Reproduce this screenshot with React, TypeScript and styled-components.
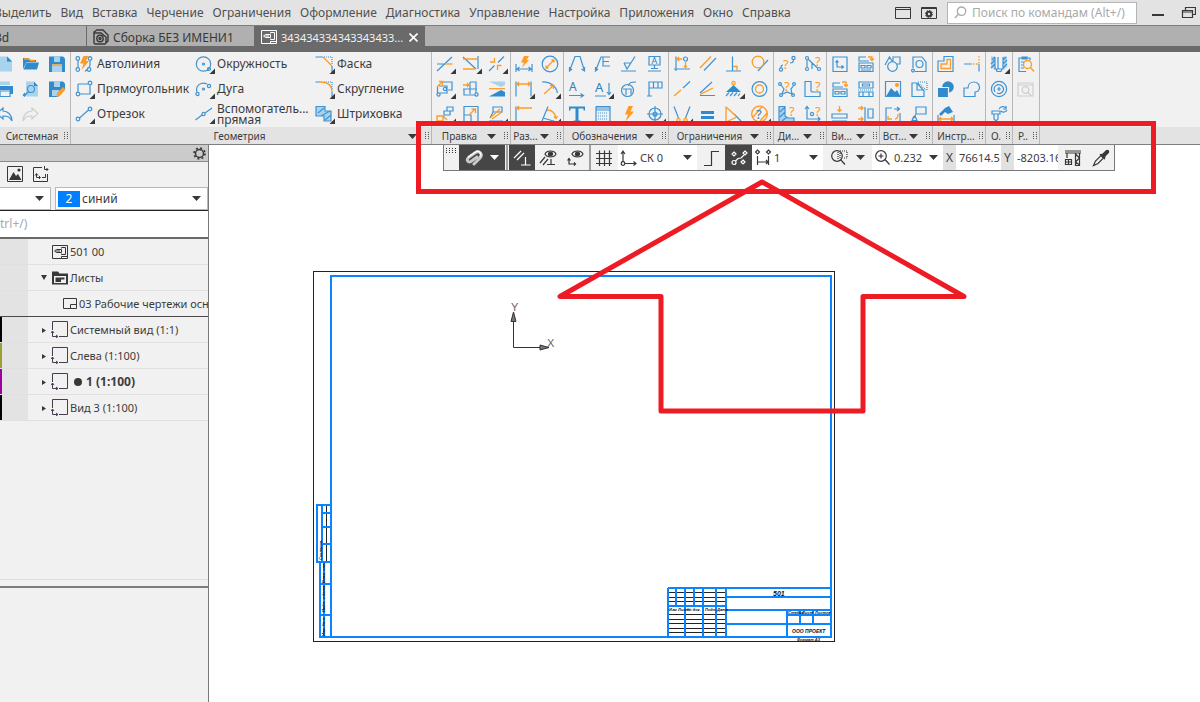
import React from "react";
import styled, { createGlobalStyle } from "styled-components";

const Global = createGlobalStyle`
  * { box-sizing: border-box; }
  body { margin: 0; background: #fff; overflow: hidden; }
  body, button, input, select { font-family: "Noto Sans", "Open Sans", sans-serif; font-size: 12px; color: #3c3c3c; }
  button { background: none; border: 0; padding: 0; margin: 0; text-align: left; white-space: nowrap; }
  svg { display: block; flex: none; }
`;

const BLUE = "#3f93d2";
const ORANGE = "#ff9a24";
const INK = "#383838";
const FRAME = "#0a84ff";

/* ---------- icons ---------- */

type Glyph = {
  b?: string; // blue strokes
  o?: string; // orange strokes
  fb?: string; // blue fills
  fl?: string; // light blue fills
  fo?: string; // orange fills
  w?: string; // separating strokes in the ribbon colour
  dash?: string; // dotted strokes
  q?: [number, number, string?]; // question mark: x, baseline, colour
  t?: [string, number, number, number]; // letter, x, y, size
  more?: boolean; // corner mark of a drop-down tool
  off?: boolean; // disabled
};

const c = (x: number, y: number, r: number) =>
  `M${x - r} ${y}a${r} ${r} 0 1 0 ${r * 2} 0a${r} ${r} 0 1 0 ${-r * 2} 0`;

const glyphs: Record<string, Glyph> = {
  newDoc: { fl: "M3 1.5H12V6.5H17V16.5H3Z", fb: "M12 1.5L17 6.5H12Z" },
  open: { fb: "M2 14V3H7L9 5H15V7H5.5Z M5.5 7.5H18L16 14.5H2.5Z", o: "M3 4H8L9.500 5.500H14" },
  save: { fb: "M2 1.5H16L18 3.5V17H2Z", fl: "M7 1.5H13V7H7Z M5 9H15V17H5Z", o: "M5 10H15" },
  print: { fb: "M2 6H18V14H15V10H5V14H2Z", fl: "M5 1.5H15V5H5Z", b: "M5 11H15V16.5H5Z" },
  preview: { fl: "M5 1.5H13V6H17V16.5H5Z", fb: "M13 1.5V6H17Z M1.500 15L4 12.500L5 15L3.500 17Z", b: c(10, 9, 3.5) + "M7.500 11.500L3 16" },
  saveAs: { fb: "M2 1.5H16L18 3.5V9L11 17H2Z", fl: "M7 1.5H13V7H7Z M5 10H12V16H5Z", fo: "M10 13L16 7L18.500 9.500L12.500 16L9.500 17Z" },
  undo: { b: "M8 3L2 8.500L8 14V11C13 11 15 12 17 16C17 10 13 6 8 6Z" },
  redo: { b: "M11 3L17 8.500L11 14V11C6 11 4 12 2 16C2 10 6 6 11 6Z", off: true },

  autoline: { b: c(3.8, 14.5, 1.8) + c(15, 14.5, 1.8) + c(3.8, 3.5, 1.8) + c(16, 3.5, 1.8) + "M4 5.500V12.500M16 5.500V10C16 13 13 14 11 16.500", fo: "M9.500 1H14.500L12 6H15L7.500 15L9.500 8.500H6Z" },
  rect: { b: "M4 4H14M16 5V14H6M4 4V12" + c(16, 3, 1.8) + c(4, 14, 1.8), more: true },
  segment: { b: "M5.500 13L14.500 5" + c(16, 4, 1.8) + c(4, 14, 1.8), more: true },
  circle: { b: c(9.5, 9, 7.2) + c(9.5, 9, 1) + c(15, 14, 1.5), more: true },
  arc: { b: "M3 12C1 6 7 1 13 4" + c(3.5, 14, 1.6) + c(15, 6, 1.6) + c(9.5, 9, 1), more: true },
  helper: { b: "M1.500 15L8 10M11 8L18 3" + c(9.5, 9, 1.6), more: true },
  chamfer: { b: "M1.500 2H9M18 11V17", o: "M9 2L18 11", dash: "M10 2H18V10", more: true },
  fillet: { b: "M1.500 2H6M18 12V17", o: "M6 2C14 2 18 5 18 12", dash: "M10 2H18V9", more: true },
  hatch: { fl: "M2 1.500H11V6H17V16H10V11H2Z", b: "M2 1.500H11V6H17V16H10V11H2ZM4 8L10 3M7 11L16 6M11 15L17 10", more: true },

  trim: { b: "M2 9H10M2 16L17 2", o: "M10 9H17.500", more: true },
  extend: { b: "M2 2L15 14M17 1V14", o: "M2 4H16M2 14H14", more: true },
  split: { b: "M2 16L7.500 10.500M11 7.500L17 1.500", o: "M3 7H7.500V3M10.500 15V10.500H14.500", more: true },
  move: { b: "M8 2H17V10H13M4 6H12V13H5M2.500 7V13" + c(3.5, 14.5, 1.6) + c(10, 9, 1.6), o: "M2 7L7 2M4 1.500H7.500V5", more: true },
  stretch: { b: "M9 2H15V13M2 9H16M9 2V14M3 9V15H14" + c(15.5, 14.5, 1.6), o: "M2 5H8M6 3L8 5L6 7" },
  mirror: { fl: "M2 1.500H18V5L14 7Z", fb: "M2 16.500H18V12L14 10Z", o: "M2 8.700H18" },
  array: { b: "M9 6H15V10H9ZM12 2H18V6H12ZM8 12H10", o: "M2 11H8V16H2ZM9 12L12 15", more: true },
  scale: { b: "M3 1.500H17V17H3ZM3 10H10V17", o: "M8 10L14 4M10.500 4H14.500V8" },
  project: { b: "M6 2H15V7H6ZM2 16H16M6 7L3 13", o: "M3 13L13 4M5 14L15 7", more: true },

  autoDim: { b: "M2 9V17M18 9V17M3 14H17M5.500 12L3 14L5.500 16M14.500 12L17 14L14.500 16", fo: "M10 1H15L12.500 5H15L8 12.500L10 7.500H7Z" },
  diameter: { b: c(10, 9, 7.8), o: "M6 13L14 5M6 10.500V13H8.500M11.500 5H14V7.500" },
  linear: { b: "M2 1.500V16.500M17 1.500V16.500", o: "M3 4H16M5 2L3 4L5 6M14 2L16 4L14 6", more: true },
  radial: { b: "M2 2C10 1 16 6 17.500 13", o: "M4 14L13 6M10 5.500H13.500V9", more: true },
  base: { b: "M2 1.500V17", o: "M3 3H18M5 1L3 3L5 5" },
  angular: { b: "M2 16L8 1.500M3 13L17 17", o: "M7 5C12 5 15 8 16 13M14 11.500L16 13.500L17.500 11", more: true },

  leader: { b: "M2.500 16L8 1.500H13L17.500 16M2.500 12V16L5 14M17.500 12V16L14.500 14" },
  leaderE: { b: "M2.500 16L8 2H17M10 2V11H17M10 6.500H16M2.500 12V16L5 14" },
  rough: { b: "M2 16H17M5 8L8 14L16 1.500M5 8H12" },
  datum: { b: "M4 1.500H15V10H4ZM9.500 10V13M3 16H16M6 13.500H13", t: ["A", 6.5, 9, 9] },
  viewA: { b: "M2 15.500H16M13.500 13.500L16.500 15.500L13.500 17.500", t: ["A", 2, 11, 12] },
  cutA: { b: "M2 16H13M16 3V14M14 12L16 14.500L18 12", t: ["A", 2, 12, 13], more: true },
  weld: { b: c(8.5, 10.5, 6) + "M4 9H12V14M7 9V15M9.500 6C10 2 13 2 17 2" },
  flag: { b: "M4 16V2H17V8H4M8.500 2V8M13 2V8M2 16H7" },
  text: { fb: "M2 1.500H18V5.500H16.500V3.500H11.500V15.500H13.500V17H6.500V15.500H8.500V3.500H3.500V5.500H2Z" },
  table: { b: "M3 1.500H17V17M3 1.500V17M3 5H17M3 3H17", dash: "M5 8H15M5 11H15M5 14H15M5 17H15" },
  auto: { fo: "M9.500 1H14L11.500 6.500H15L6.500 16.500L9 9.500H6Z" },
  center: { b: c(10, 9, 6) + "M10 1V17M2 9H18" + c(10, 9, 2), more: true },

  align: { b: "M4 1.500V16M2 14H18" + c(13.5, 4, 2), o: "M5 4H10M7 2L5 4L7 6M13.500 7V12.500M12 11L13.500 12.500L15 11" },
  parallel: { b: "M6 15.500L18 3", o: "M2 13L13 1.500" },
  perp: { b: "M8.500 1.500V15.500M2 16H17", o: "M9 11.500H13V15.500" },
  tangent: { b: "M8 16L18 5", o: c(8, 7, 5.8) },
  collinear: { b: "M11 8L18 1.500", o: "M2 16L9 10" },
  angle: { b: "M2 13L14 2M2 15.500H17", o: "M2 14.500L15 8" },
  fix: { fb: "M9.500 5L17 12H2Z", b: "M2 16L5 12.500M6 16L9 12.500M10 16L13 12.500M14 16L16 13.500", o: c(9.5, 3, 1.6), more: true },
  concentric: { b: c(9.5, 9, 7.4), o: c(9.5, 9, 4) },
  symmetric: { b: "M2 1.500L6.500 13M18 1.500L13.500 13", o: c(6.5, 15, 1.6) + c(13.5, 15, 1.6), more: true },
  equal: { fb: "M3 6H16V9H3ZM3 11H16V14H3Z" },
  bisector: { b: "M10 9L17 16", o: "M2 1.500V17L13 12M2 2L12 11" },
  check: { o: c(9.5, 9, 7.8) + "M3 12L12 2M10 16L17 8", q: [6, 14, "#2f80bb"], more: true },

  measPt: { b: c(4, 14.5, 1.6) + c(16.5, 3, 1.6) + "M4 12.500C4 11 4 10 6 10M16.500 5C16.500 7 16 8 13 8", q: [6, 14] },
  measAng: { b: c(4, 3, 1.5) + c(4, 14, 1.5) + c(16, 14, 1.5) + "M5 4L14.500 13M4 5V12M9 8V14", q: [12, 11] },
  measPoly: { b: "M4 5L7 9L5 14M6 14L10 12L15 14L14 9L17 5" + c(3, 4, 1.4) + c(17, 4, 1.4) + c(4, 15, 1.4) + c(16, 15, 1.4), q: [7, 11] },
  measArea: { b: "M2 1.500H8V11C8 12 9 12 11 12H17V16.500H2Z", q: [12, 11] },
  measMass: { fl: "M2 1.500H8V11L11 13H17V17H2Z", b: "M2 1.500H8V11L11 13H17V17H2ZM3 7L8 2M3 12L8 7M5 16L10 12", q: [12, 11] },
  measXY: { b: "M4 2V14H17M2 4L4 1.500L6 4M15 12L17 14L15 16" + c(9, 9, 1.6), q: [12, 11] },

  viewStd: { b: "M3 2H17V16.500H3ZM7 6V12H13M5.500 7.500L7 5.500L8.500 7.500M11.500 10.500L13.500 12L11.500 13.500" },
  viewAll: { b: "M10 2H3V6H13M3 8H17V16.500H3ZM5 10.500H9V13H5ZM11 10.500H15V13H11ZM5 15H15", o: "M12 2H16V5M14 3.500L16 5.500L18 3.500" },
  viewDet: { b: "M10 3H3V7H13M3 9H17V16.500H3ZM5 11.500H9V14H5ZM11 11.500H15V14H11Z", o: "M12 2H16V6M14 4.500L16 6.500L18 4.500" },
  viewRow: { b: "M3 2H17V8H3ZM6.500 4H13.500V6H6.500ZM3 12H17V16.500H3ZM7 12V16M13 12V16", dash: "M2 10H18" },
  gap: { b: "M2 9H17V13H2ZM2 16H17", o: "M9.500 1V6M7.500 4.500L9.500 6.500L11.500 4.500" },
  gap2: { b: "M12 4H17V13H12ZM9 2V16", o: "M2 3H7M5 1L7 3L5 5M2 14H7M5 12L7 14L5 16" },

  shapes: { b: "M2 10L6.500 2L9 6M10 6V2H17V9H14" + c(9.5, 11.5, 4.8) },
  nut: { b: "M4 13V2H13L17 7V16.500H6" + c(10.5, 9, 3.5) + c(4, 15.5, 1.4) },
  image: { b: "M2.500 1.500H17.500V16.500H2.500Z", fb: "M3 16.500L8 8L12 12L14 10L17.500 16.500Z", fo: c(14, 5, 2) },
  fragment: { b: "M8 3H3V16.500H15V11ZM8 3V10H15", dash: "M9 2H18V10M9 3L17 10" },
  link: { b: "M9 3H3V16.500H6M17 8V16.500H15M11 4H16M14 2L16.500 4L14 6", o: "M5 11V14H9M12 14C14 14 15 12 15 9" },
  callout: { b: "M7 2H17V9H7ZM7 9L3 15.500M5 11L3 15.500H8L6 11" },

  contour: { b: "M2 6H8V1.500H17V16.500H2Z", o: "M5 9H11V4.500H14.500V13.500H5Z" },
  lines: { b: "M2 9H10M17 9V16.500", o: "M11 9H12.500M14 9H15.500M17 1V2.500M17 4V5.500M17 7V8.500" },
  union: { fb: c(12, 7, 5.8) + "M2 8V17H12V8Z", w: "M1.500 7.500H12.500V17" },
  outline: { b: "M2 8H6C6 0 18 0 17.500 8C17 11 15 12 13 12V16.500H2Z" },
  ruler: { fb: "M9 3L13 1L17 7L12 9L9 7L5 11L3 9Z", o: "M3 14H17M5 12L3 14L5 16M15 12L17 14L15 16", b: "M2 10V17M18 10V17" },

  hole: { b: "M6 2V14H14V2M7 14L8 16.500H12L13 14M9 2V14M3 5L6 2M2 9L6 5M2 13L6 9M14 5L17 2M14 9L18 5M14 13L18 9", fl: "M2 1.500H5.500V15L2 12ZM14.500 1.500H18V12L14.500 15Z", more: true },
  spiral: { b: c(10, 9, 7.6) + "M6 12C3 6 9 3 13 6C17 10 12 15 8 13M8 9H12M10 7V11" },
  bolt: { b: "M3 6H11V9H3ZM5 9V14L7 16L9 14V9M10 4C12 1 15 1 17 3M17 1V4H14M12 6C14 8 17 7 18 5" },
  docs: { b: "M10 16.500H3V3H14V5M6 2H11V4H6ZM5 7H8M5 10H7M5 13H8", o: c(11.5, 9.5, 4) + "M14.500 12.500L18 16.500" },
  docsOff: { b: "M2 3H17V16H2ZM2 5H17" + c(9.5, 10, 3.4) + "M12 12.500L15 15.500", off: true },
};

const ToolSvg = ({ name }: { name: string }) => {
  const g = glyphs[name];
  const line = g.off ? "#cfcfcf" : BLUE;
  return (
    <svg width="22" height="20" viewBox="0 0 22 20" fill="none" strokeWidth="1.2" aria-hidden="true">
      {g.fb && <path d={g.fb} fill="#2f8bcb" />}
      {g.fl && <path d={g.fl} fill="#a9d3ec" />}
      {name === "newDoc" && <path d="M12 1.500L17 6.500H12Z" fill="#2f8bcb" />}
      {g.w && <path d={g.w} stroke="#f1f1f1" />}
      {g.b && <path d={g.b} stroke={line} />}
      {g.dash && <path d={g.dash} stroke={BLUE} strokeDasharray="1 1" />}
      {g.o && <path d={g.o} stroke={ORANGE} strokeWidth="1.3" />}
      {g.fo && <path d={g.fo} fill={ORANGE} />}
      {g.q && (
        <text x={g.q[0]} y={g.q[1]} fontSize="13" fill={g.q[2] || ORANGE}>
          ?
        </text>
      )}
      {g.t && (
        <text x={g.t[1]} y={g.t[2]} fontSize={g.t[3]} fill="#2f80bb">
          {g.t[0]}
        </text>
      )}
      {g.more && <path d="M21 13.500V19H15.500Z" fill={INK} />}
    </svg>
  );
};

const Caret = ({ color = INK }: { color?: string }) => (
  <svg width="9" height="5" viewBox="0 0 9 5" aria-hidden="true">
    <path d="M0 0H9L4.500 5Z" fill={color} />
  </svg>
);

const DrawingIcon = ({ color = INK }: { color?: string }) => (
  <svg width="16" height="16" viewBox="0 0 16 16" fill="none" stroke={color} aria-hidden="true">
    <path d="M0.500 1.500H15.500V14.500H0.500ZM9.500 4.500V3.500H13.500V10.500H9.500V9.500M9.500 5.500H4.500L2.500 7L4.500 8.500H9.500ZM4 7H8M9.500 14V12.500H15" />
  </svg>
);

/* ---------- page frame ---------- */

const Page = styled.div`
  position: relative;
  display: flex;
  flex-direction: column;
  min-height: 100vh;
  overflow: hidden;
`;

const TopBar = styled.header`
  display: flex;
  align-items: center;
  height: 26px;
  background: #e3e3e3;
  border-bottom: 1px solid #7d7d7d;
`;

const Menu = styled.nav`
  display: flex;
  gap: 9px;
  margin-left: -6px;
`;

const MenuButton = styled.button`
  line-height: 24px;
  color: #505050;
`;

const WindowTools = styled.div`
  display: flex;
  align-items: center;
  gap: 10px;
  margin-left: auto;
  padding-right: 4px;
`;

const SearchBox = styled.label`
  display: flex;
  align-items: center;
  gap: 5px;
  width: 190px;
  height: 22px;
  padding-left: 6px;
  background: #fff;
  border: 1px solid #b4b4b4;
`;

const PlainInput = styled.input`
  flex: 1;
  min-width: 0;
  padding: 0;
  border: 0;
  background: transparent;
  outline: 0;
  &::placeholder { color: #a9a9a9; opacity: 1; }
`;

const TabStrip = styled.div`
  display: flex;
  height: 26px;
  background: #b0b0b0;
  border-bottom: 6px solid #6a6a6a;
`;

const Tab = styled.button<{ $width: number; $active?: boolean }>`
  display: flex;
  align-items: center;
  gap: 4px;
  width: ${(p) => p.$width}px;
  height: ${(p) => (p.$active ? 26 : 20)}px;
  padding: 2px 6px ${(p) => (p.$active ? 6 : 0)}px;
  overflow: hidden;
  font-size: ${(p) => (p.$active ? 11 : 12)}px;
  color: ${(p) => (p.$active ? "#f2f2f2" : INK)};
  background: ${(p) => (p.$active ? "#6a6a6a" : "#b0b0b0")};
  border-right: 1px solid #6a6a6a;
`;

const ClippedTab = styled(Tab)`
  padding-left: 0;
  text-indent: -5px;
`;

const CloseMark = styled.span`
  margin-left: auto;
`;

/* ---------- ribbon ---------- */

const Ribbon = styled.section`
  display: flex;
  height: 93px;
  background: #f1f1f1;
  border-bottom: 1px solid #7f7f7f;
`;

const Group = styled.div<{ $width: number }>`
  display: flex;
  flex-direction: column;
  flex: none;
  width: ${(p) => p.$width}px;
  border-right: 1px solid #b8b8b8;
`;

const ToolGrid = styled.div<{ $cols: number; $cell: number; $end?: boolean }>`
  display: grid;
  grid-template-columns: repeat(${(p) => p.$cols}, ${(p) => p.$cell}px);
  grid-auto-rows: 25px;
  justify-content: ${(p) => (p.$end ? "end" : "start")};
  height: 75px;
  overflow: hidden;
`;

const ToolButton = styled.button`
  display: flex;
  align-items: flex-start;
  gap: 1px;
  padding: 3px 0 0 3px;
`;

const ToolLabel = styled.span<{ $two?: boolean }>`
  line-height: ${(p) => (p.$two ? 11 : 18)}px;
  margin-top: ${(p) => (p.$two ? -2 : 0)}px;
  white-space: pre;
`;

const GroupBar = styled.div`
  display: flex;
  align-items: center;
  height: 17px;
  padding-top: 1px;
  background: #e3e3e3;
`;

const GroupName = styled.span`
  flex: 1;
  font-size: 10px;
  line-height: 16px;
  text-align: center;
  white-space: nowrap;
`;

const RibbonRest = styled.div`
  flex: 1;
  align-self: flex-end;
  height: 17px;
  background: #e3e3e3;
`;

const Dots = ({ cols = 2, rows = 4 }: { cols?: number; rows?: number }) => (
  <svg width={cols * 3} height={rows * 2 + 1} aria-hidden="true">
    {Array.from({ length: cols * rows }, (_, i) => (
      <rect key={i} x={(i % cols) * 3} y={Math.floor(i / cols) * 2} width="1" height="1" fill="#555" />
    ))}
  </svg>
);

const GroupEnd = styled.span`
  display: flex;
  align-items: center;
  gap: 8px;
`;

const groups: { name: string; width: number; cols: number; caret?: boolean; tools: string[] }[] = [
  { name: "Правка", width: 79, cols: 3, caret: true, tools: ["trim", "extend", "split", "move", "stretch", "mirror", "array", "scale", "project"] },
  { name: "Раз...", width: 53, cols: 2, caret: true, tools: ["autoDim", "diameter", "linear", "radial", "base", "angular"] },
  { name: "Обозначения", width: 105, cols: 4, caret: true, tools: ["leader", "leaderE", "rough", "datum", "viewA", "cutA", "weld", "flag", "text", "table", "auto", "center"] },
  { name: "Ограничения", width: 105, cols: 4, caret: true, tools: ["align", "parallel", "perp", "tangent", "collinear", "angle", "fix", "concentric", "symmetric", "equal", "bisector", "check"] },
  { name: "Ди...", width: 53, cols: 2, caret: true, tools: ["measPt", "measAng", "measPoly", "measArea", "measMass", "measXY"] },
  { name: "Ви...", width: 53, cols: 2, caret: true, tools: ["viewStd", "viewAll", "viewDet", "viewRow", "gap", "gap2"] },
  { name: "Вст...", width: 53, cols: 2, caret: true, tools: ["shapes", "nut", "image", "fragment", "link", "callout"] },
  { name: "Инстр...", width: 53, cols: 2, tools: ["contour", "lines", "union", "outline", "ruler"] },
  { name: "О.", width: 27, cols: 1, tools: ["hole", "spiral", "bolt"] },
  { name: "Р..", width: 27, cols: 1, tools: ["docs", "docsOff"] },
];

const geometry: [string, string][] = [
  ["autoline", "Автолиния"],
  ["circle", "Окружность"],
  ["chamfer", "Фаска"],
  ["rect", "Прямоугольник"],
  ["arc", "Дуга"],
  ["fillet", "Скругление"],
  ["segment", "Отрезок"],
  ["helper", "Вспомогатель...\nпрямая"],
  ["hatch", "Штриховка"],
];

/* ---------- work area ---------- */

const Work = styled.main`
  display: flex;
  flex: 1;
`;

const Panel = styled.aside`
  display: flex;
  flex-direction: column;
  flex: none;
  width: 209px;
  background: #f1f1f1;
  border-right: 1px solid #7a7a7a;
`;

const PanelHead = styled.div`
  display: flex;
  justify-content: flex-end;
  align-items: center;
  height: 17px;
  padding-right: 2px;
  background: #cbcbcb;
  border-bottom: 1px solid #8a8a8a;
`;

const PanelTools = styled.div`
  display: flex;
  align-items: center;
  gap: 10px;
  height: 25px;
  padding: 0 0 2px 7px;
`;

const Fields = styled.div`
  display: flex;
  gap: 4px;
  height: 24px;
  border-bottom: 1px solid #222;
`;

const Field = styled.label<{ $width?: number }>`
  display: flex;
  align-items: center;
  gap: 2px;
  flex: ${(p) => (p.$width ? "none" : 1)};
  width: ${(p) => (p.$width ? p.$width + "px" : "auto")};
  height: 23px;
  padding: 0 6px 0 2px;
  background: #fff;
  border: 1px solid #b8b8b8;
  border-left-width: ${(p) => (p.$width ? 0 : 1)}px;
`;

const Select = styled.select`
  appearance: none;
  flex: 1;
  min-width: 0;
  padding: 0;
  border: 0;
  background: transparent;
  outline: 0;
`;

const Swatch = styled.span`
  width: 22px;
  line-height: 16px;
  text-align: center;
  color: #fff;
  background: #0080ff;
`;

const TreeSearch = styled.div`
  display: flex;
  height: 28px;
  padding-bottom: 2px;
  overflow: hidden;
  background: #fff;
  border-bottom: 2px solid #6a6a6a;
`;

const Tree = styled.div`
  flex: 1;
  border-bottom: 1px solid #dedede;
`;

const Row = styled.div<{ $bar?: string; $strong?: boolean; $indent: number; $rule?: boolean }>`
  display: flex;
  align-items: center;
  gap: 2px;
  height: 26px;
  padding-left: ${(p) => p.$indent}px;
  overflow: hidden;
  white-space: nowrap;
  font-size: ${(p) => (p.$strong ? 12 : 11)}px;
  font-weight: ${(p) => (p.$strong ? 700 : 400)};
  background: linear-gradient(90deg, ${(p) => p.$bar || "#e3e3e3"} 2px, #e3e3e3 2px, #e3e3e3 28px, #f1f1f1 28px);
  border-bottom: 1px solid ${(p) => (p.$rule ? "#4a4a4a" : "#e0e0e0")};
`;

const Twist = styled.svg`
  margin-right: 2px;
`;

const LowerPane = styled.div`
  height: 122px;
  padding-top: 6px;
`;

const Divider = styled.hr`
  height: 2px;
  margin: 0;
  border: 0;
  background: #7d7d7d;
`;

const Canvas = styled.section`
  position: relative;
  flex: 1;
  background: #fff;
`;

const Sheet = styled.svg`
  position: absolute;
  left: 0;
  top: 0;
`;

const FloatBar = styled.div`
  position: absolute;
  left: 234px;
  top: 0;
  display: flex;
  height: 26px;
  background: #f1f1f1;
  border: 1px solid #777;
  border-top: 0;
  input, select { font-size: 11px; }
`;

const FloatCell = styled.div<{ $w: number }>`
  display: flex;
  align-items: center;
  justify-content: center;
  width: ${(p) => p.$w}px;
  height: 25px;
`;

const FloatButton = styled.button<{ $w: number; $dark?: boolean }>`
  display: flex;
  align-items: center;
  justify-content: space-evenly;
  width: ${(p) => p.$w}px;
  height: 25px;
  background: ${(p) => (p.$dark ? "#464646" : "#f1f1f1")};
`;

const FloatLabel = styled.label<{ $w: number }>`
  display: flex;
  align-items: center;
  gap: 2px;
  width: ${(p) => p.$w}px;
  height: 25px;
  padding: 0 5px 0 2px;
  background: #fff;
`;

const Coord = styled.label<{ $w: number }>`
  display: flex;
  width: ${(p) => p.$w}px;
  line-height: 25px;
  background: #e1e1e1;
`;

const CoordName = styled.span`
  width: 13px;
  text-align: center;
`;

const CoordInput = styled(PlainInput)`
  padding-left: 3px;
  background: #fff;
`;

const Split = styled.span`
  width: 2px;
  margin: 0 1px;
  background: #a0a0a0;
`;

const Annotation = styled.svg`
  position: absolute;
  left: 0;
  top: 0;
  pointer-events: none;
`;

const Mono = ({ d, color = INK, children }: { d: string; color?: string; children?: React.ReactNode }) => (
  <svg width="18" height="18" viewBox="0 0 18 18" fill="none" stroke={color} strokeWidth="1.2" aria-hidden="true">
    <path d={d} />
    {children}
  </svg>
);

const EYE = "M6 5C8 1 15 1 17 5C15 9 8 9 6 5Z";

const ViewIcon = () => (
  <svg width="17" height="17" viewBox="0 0 17 17" fill="none" stroke="#4a3c50" aria-hidden="true">
    <path d="M1.500 9V0.500H16.500V15.500H8M1.500 10V15.500H7M0 12L1.500 10L3 12M5 14L7 15.500L5 17" />
  </svg>
);

const views = [
  { name: "Системный вид (1:1)", bar: "#000" },
  { name: "Слева (1:100)", bar: "#9aa035" },
  { name: "1 (1:100)", bar: "#a000a0", strong: true },
  { name: "Вид 3 (1:100)", bar: "#000" },
];

const menu = ["Выделить", "Вид", "Вставка", "Черчение", "Ограничения", "Оформление", "Диагностика", "Управление", "Настройка", "Приложения", "Окно", "Справка"];

const Drawing = () => (
  <Sheet width="640" height="510" viewBox="209 145 640 510" fill="none">
    <rect x="313.500" y="271.500" width="521" height="370" stroke="#222" />
    <g stroke="#222">
      <path d="M326.500 506V562" />
      <path d="M669 592.500H725M669 597.500H725M669 601.500H725M669 614.500H725M669 619.500H725M669 623.500H725M669 628.500H725M669 632.500H725" />
    </g>
    <g stroke={FRAME} strokeWidth="2">
      <path d="M331 276H831V637H331Z" />
      <path d="M331 505H317V562H331M322 505V562M317 562H320V637H331M324 562V637M322 513H331M322 527H331M322 544H331M320 584H331M320 615H331" />
      <path d="M668 588H831M668 588V637M676 588V606M685 588V637M694 588V606M703 588V637M716 588V637M726 588V637M668 606H726M726 597H831M726 610H831M726 624H831M787 610V637M787 615H831M800 610V624M813 610V624" />
    </g>
    <g fill="#111" fontFamily="Liberation Sans, sans-serif" fontStyle="italic" fontWeight="bold" fontSize="4">
      <text x="669" y="611">Изм Лист</text>
      <text x="687" y="611">№ док.</text>
      <text x="705" y="611">Подп.</text>
      <text x="717" y="611">Дата</text>
      <text x="788" y="614">Стадия</text>
      <text x="802" y="614">Лист</text>
      <text x="815" y="614">Листов</text>
      <text x="797" y="641">Формат А3</text>
      <text x="773" y="596" fontSize="7">501</text>
      <text x="792" y="633" fontSize="5">ООО ПРОЕКТ</text>
      <text transform="translate(322 560) rotate(-90)">Согласов.</text>
      <text transform="translate(325 583) rotate(-90)">Взам. инв.</text>
      <text transform="translate(325 612) rotate(-90)">Подп. и дата</text>
      <text transform="translate(325 636) rotate(-90)">Инв. № п.</text>
    </g>
    <g stroke="#333">
      <path d="M513.500 312V347.500H549" />
      <path d="M511 321.500L513.500 312L516 321.500Z M540 345L549 347.500L540 350Z" fill="#777" />
    </g>
    <g fill="#666" fontFamily="Liberation Sans, sans-serif" fontSize="11">
      <text x="511" y="311">Y</text>
      <text x="547" y="347">X</text>
    </g>
  </Sheet>
);

const SnapBar = () => (
  <FloatBar role="toolbar" aria-label="Панель быстрого доступа">
    <FloatCell $w={15}>
      <svg width="11" height="19" aria-hidden="true">
        {[0, 1, 2, 3, 4, 5, 6, 7, 8, 9, 10, 11].map((i) => (
          <rect key={i} x={(i % 4) * 3} y={Math.floor(i / 4) * 2} width="1" height="1" fill="#333" />
        ))}
      </svg>
    </FloatCell>
    <FloatButton $w={46} $dark aria-label="Привязки">
      <svg width="18" height="18" viewBox="0 0 18 18" fill="none" strokeLinecap="round" aria-hidden="true">
        <path d="M9 15L15.500 8.500C18 5 14 1 10.500 3.500L3.500 8.500C1 11 3 14 6 12.500L12 8" stroke="#c9c9c9" strokeWidth="3" />
        <path d="M3.500 8L10.500 3C14 1 17 4 15 7.500" stroke="#fff" strokeWidth="1.300" />
      </svg>
      <Caret color="#fff" />
    </FloatButton>
    <Split />
    <FloatButton $w={26} $dark aria-label="Параметрический режим">
      <Mono color="#fff" d="M1 9L8 2M4 11L11 4M12.500 8V16M8 16H17.500" />
    </FloatButton>
    <FloatButton $w={26} aria-label="Отображать ограничения">
      <Mono d={EYE + "M1 14L6 8M4 16L9 10M12 10V15M8 15.500H16"}><circle cx="11.500" cy="5" r="2" fill={INK} /></Mono>
    </FloatButton>
    <FloatButton $w={27} aria-label="Отображать степени свободы">
      <Mono d={EYE + "M3 10V15H9M1.500 11.500L3 9.500L4.500 11.500M8 13.500L9.500 15L8 16.500"}><circle cx="11.500" cy="5" r="2" fill={INK} /></Mono>
    </FloatButton>
    <Split />
    <FloatButton $w={26} aria-label="Сетка">
      <Mono d="M0 4.500H16M0 9.500H16M0 14.500H16M3.500 1.500V17M8.500 1.500V17M13.500 1.500V17" />
    </FloatButton>
    <FloatLabel $w={79}>
      <Mono d="M3 2V13M1 5L3 2L5 5M5 14.500H15M13.500 12.500L16 14.500L13.500 16.500"><circle cx="3" cy="14.500" r="1.800" /></Mono>
      <Select aria-label="Система координат"><option>СК 0</option></Select>
      <Caret />
    </FloatLabel>
    <FloatButton $w={28} aria-label="Ортогональное черчение">
      <Mono d="M2 16.500H9.500V2.500H17" />
    </FloatButton>
    <FloatButton $w={27} $dark aria-label="Округление">
      <Mono color="#fff" d="M4 3L6 5L4 7L2 5ZM15 2L17 4L15 6L13 4ZM13 11L15 13L13 15L11 13ZM5.500 12L8 9.500L11 9L14 6"><circle cx="4" cy="13.500" r="2" /></Mono>
    </FloatButton>
    <FloatLabel $w={71}>
      <Mono d="M3.500 7V16M14.500 7V16M4 13H14M12 11L14 13L12 15M3.500 1L5.500 3L3.500 5L1.500 3ZM14.500 1L16.500 3L14.500 5L12.500 3Z" />
      <Select aria-label="Шаг курсора"><option>1</option></Select>
      <Caret />
    </FloatLabel>
    <FloatButton $w={49} aria-label="Показать">
      <Mono d="M10.500 10.500L15 15.500"><circle cx="7" cy="7" r="5.300" /><path d="M10 2H17V9H13M8 3V11M10 4V10" strokeDasharray="1 1" /></Mono>
      <Caret />
    </FloatButton>
    <FloatLabel $w={71}>
      <Mono d="M11 10.500L15.500 15.500M4.500 7H9.500M7 4.500V9.500"><circle cx="7" cy="7" r="5.300" /></Mono>
      <PlainInput aria-label="Масштаб" defaultValue="0.232" />
      <Caret />
    </FloatLabel>
    <Coord $w={58}><CoordName>X</CoordName><CoordInput defaultValue="76614.51" /></Coord>
    <Coord $w={57}><CoordName>Y</CoordName><CoordInput defaultValue="-8203.16" /></Coord>
    <FloatButton $w={30} aria-label="Измерения">
      <Mono d="M1 2H17M1 4H17M3 4V9M1.500 10.500H7.500V15.500H1.500ZM4.500 10.500V15M1.500 13H7.500M11.500 4V16.500H15.500V4M11.500 5L15.500 9L11.500 13L15.500 16" />
    </FloatButton>
    <FloatButton $w={26} aria-label="Пипетка">
      <Mono d="M1.500 16.500L3.500 12L9 6.500L11.500 9L6 14.500Z"><path d="M8.500 5.500L12.500 9.500L13 7L16.500 3.500C17 2 16 1 14.500 1.500L11 5Z" fill={INK} /></Mono>
    </FloatButton>
  </FloatBar>
);

export default function App() {
  return (
    <Page>
      <Global />
      <TopBar>
        <Menu>
          {menu.map((m) => (
            <MenuButton key={m}>{m}</MenuButton>
          ))}
        </Menu>
        <WindowTools>
          <svg width="16" height="12" viewBox="0 0 16 12" fill="none" stroke={INK} aria-hidden="true">
            <path d="M0.500 0.500H15.500V11.500H0.500ZM0.500 2.500H15.500" />
          </svg>
          <svg width="16" height="12" viewBox="0 0 16 12" fill="none" stroke={INK} aria-hidden="true">
            <path d="M0.500 0.500H15.500V11.500H0.500ZM0.500 1.500H15.500" />
            <circle cx="8" cy="7" r="2.200" strokeWidth="2" />
            <circle cx="8" cy="7" r="3.600" strokeDasharray="1.400 1.400" />
          </svg>
          <SearchBox>
            <svg width="13" height="13" viewBox="0 0 13 13" fill="none" stroke="#aaa" strokeWidth="1.300" aria-hidden="true">
              <circle cx="7.500" cy="5.200" r="4.200" />
              <path d="M4.500 8L1 12" />
            </svg>
            <PlainInput placeholder="Поиск по командам (Alt+/)" aria-label="Поиск по командам" />
          </SearchBox>
          <svg width="49" height="14" viewBox="0 0 49 14" fill="none" stroke={INK} aria-hidden="true">
            <path d="M5 9H17" strokeWidth="2" />
            <path d="M35.500 4.500H45.500V11.500H35.500ZM35.500 6H45.500M38.500 4V1.500H48.500V8.500H46" strokeWidth="1.200" />
          </svg>
        </WindowTools>
      </TopBar>

      <TabStrip role="tablist">
        <ClippedTab role="tab" $width={87}>3d</ClippedTab>
        <Tab role="tab" $width={168}>
          <svg width="16" height="16" viewBox="0 0 16 16" fill="none" stroke={INK} strokeWidth="1.400" aria-hidden="true">
            <path d="M1 14V3L4 1H10L15 6V12L12 15H2ZM1 4H8L13 8V14" />
            <circle cx="7" cy="9.500" r="3.200" />
            <circle cx="7" cy="9.500" r="1" />
          </svg>
          Сборка БЕЗ ИМЕНИ1
        </Tab>
        <Tab role="tab" aria-selected="true" $active $width={170}>
          <DrawingIcon color="#fff" />
          343434334343343433...
          <CloseMark>
            <svg width="9" height="9" viewBox="0 0 9 9" stroke="#fff" strokeWidth="1.600" aria-hidden="true">
              <path d="M0.500 0.500L8.500 8.500M8.500 0.500L0.500 8.500" />
            </svg>
          </CloseMark>
        </Tab>
      </TabStrip>

      <Ribbon>
        <Group $width={71}>
          <ToolGrid $cols={3} $cell={26} $end>
            {["newDoc", "open", "save", "print", "preview", "saveAs", "undo", "redo"].map((t) => (
              <ToolButton key={t} aria-label={t}><ToolSvg name={t} /></ToolButton>
            ))}
          </ToolGrid>
          <GroupBar><GroupName>Системная</GroupName><GroupEnd><Dots /></GroupEnd></GroupBar>
        </Group>
        <Group $width={361}>
          <ToolGrid $cols={3} $cell={120}>
            {geometry.map(([icon, label]) => (
              <ToolButton key={icon}>
                <ToolSvg name={icon} />
                <ToolLabel $two={label.includes("\n")}>{label}</ToolLabel>
              </ToolButton>
            ))}
          </ToolGrid>
          <GroupBar><GroupName>Геометрия</GroupName><GroupEnd><Caret /><Dots /></GroupEnd></GroupBar>
        </Group>
        {groups.map((g) => (
          <Group key={g.name} $width={g.width}>
            <ToolGrid $cols={g.cols} $cell={26}>
              {g.tools.map((t) => (
                <ToolButton key={t} aria-label={t}><ToolSvg name={t} /></ToolButton>
              ))}
            </ToolGrid>
            <GroupBar>
              <GroupName>{g.name}</GroupName>
              <GroupEnd>{g.caret && <Caret />}<Dots /></GroupEnd>
            </GroupBar>
          </Group>
        ))}
        <RibbonRest />
      </Ribbon>

      <Work>
        <Panel>
          <PanelHead>
            <svg width="13" height="13" viewBox="0 0 13 13" fill="none" stroke={INK} aria-hidden="true">
              <circle cx="6.500" cy="6.500" r="4" strokeWidth="1.500" />
              <circle cx="6.500" cy="6.500" r="5.500" strokeWidth="1.600" strokeDasharray="2 2.320" />
            </svg>
          </PanelHead>
          <PanelTools>
            <svg width="16" height="16" viewBox="0 0 16 16" aria-hidden="true">
              <path d="M0.500 0.500H15.500V15.500H0.500Z" fill="none" stroke={INK} />
              <path d="M2 14L6.500 6L9 10L11 8L14.500 14Z" fill={INK} />
              <circle cx="12" cy="4" r="1.600" fill={INK} />
            </svg>
            <svg width="16" height="16" viewBox="0 0 16 16" fill="none" stroke={INK} aria-hidden="true">
              <path d="M9 1.500H0.500V15.500H14.500V8M3.500 8V11.500H7M2 9.500L3.500 7.500L5 9.500M6 10L7.500 11.500L6 13M11.500 0V3.500H15M13.500 2L15 3.500L13.500 5M9 11.500H12.500V8" />
            </svg>
          </PanelTools>
          <Fields>
            <Field $width={51}>
              <Select aria-label="Слой"><option></option></Select>
              <Caret />
            </Field>
            <Field>
              <Swatch>2</Swatch>
              <Select aria-label="Цвет"><option>синий</option></Select>
              <Caret />
            </Field>
          </Fields>
          <TreeSearch>
            <PlainInput placeholder="trl+/)" aria-label="Поиск" />
          </TreeSearch>
          <Tree>
            <Row $indent={52}><DrawingIcon />501 00</Row>
            <Row $indent={40}>
              <Twist width="8" height="8"><path d="M1 1H7L4 6Z" fill={INK} /></Twist>
              <svg width="16" height="14" viewBox="0 0 16 14" aria-hidden="true">
                <path d="M0 13.500V0.500H6L7.500 2.500H16V13.500Z" fill={INK} />
                <path d="M2 5H14V12H2Z" fill="#f1f1f1" />
                <path d="M3.500 6.500H12.500V8.500H9V11H3.500Z" fill={INK} />
              </svg>
              Листы
            </Row>
            <Row $indent={63} $rule>
              <svg width="14" height="11" viewBox="0 0 14 11" fill="none" stroke={INK} aria-hidden="true">
                <path d="M0.500 0.500H13.500V10.500H0.500ZM7.500 10V6.500H13" />
              </svg>
              03 Рабочие чертежи основного
            </Row>
            {views.map((v) => (
              <Row key={v.name} $indent={40} $bar={v.bar} $strong={v.strong}>
                <Twist width="7" height="8"><path d="M2 2L6 4.500L2 7Z" fill={INK} /></Twist>
                <ViewIcon />
                {v.strong && (
                  <svg width="14" height="8" aria-hidden="true"><circle cx="8" cy="4" r="4" fill={INK} /></svg>
                )}
                {v.name}
              </Row>
            ))}
          </Tree>
          <LowerPane><Divider /></LowerPane>
        </Panel>
        <Canvas>
          <Drawing />
          <SnapBar />
        </Canvas>
      </Work>

      <Annotation width="1200" height="450" viewBox="0 0 1200 450" fill="none" stroke="#ed1c24" strokeWidth="5" aria-hidden="true">
        <path d="M418.500 123.500H1153.500V191.500H418.500Z" />
        <path d="M762 182L560 296.500H661V411H863V296.500H964Z" strokeLinejoin="round" />
      </Annotation>
    </Page>
  );
}
